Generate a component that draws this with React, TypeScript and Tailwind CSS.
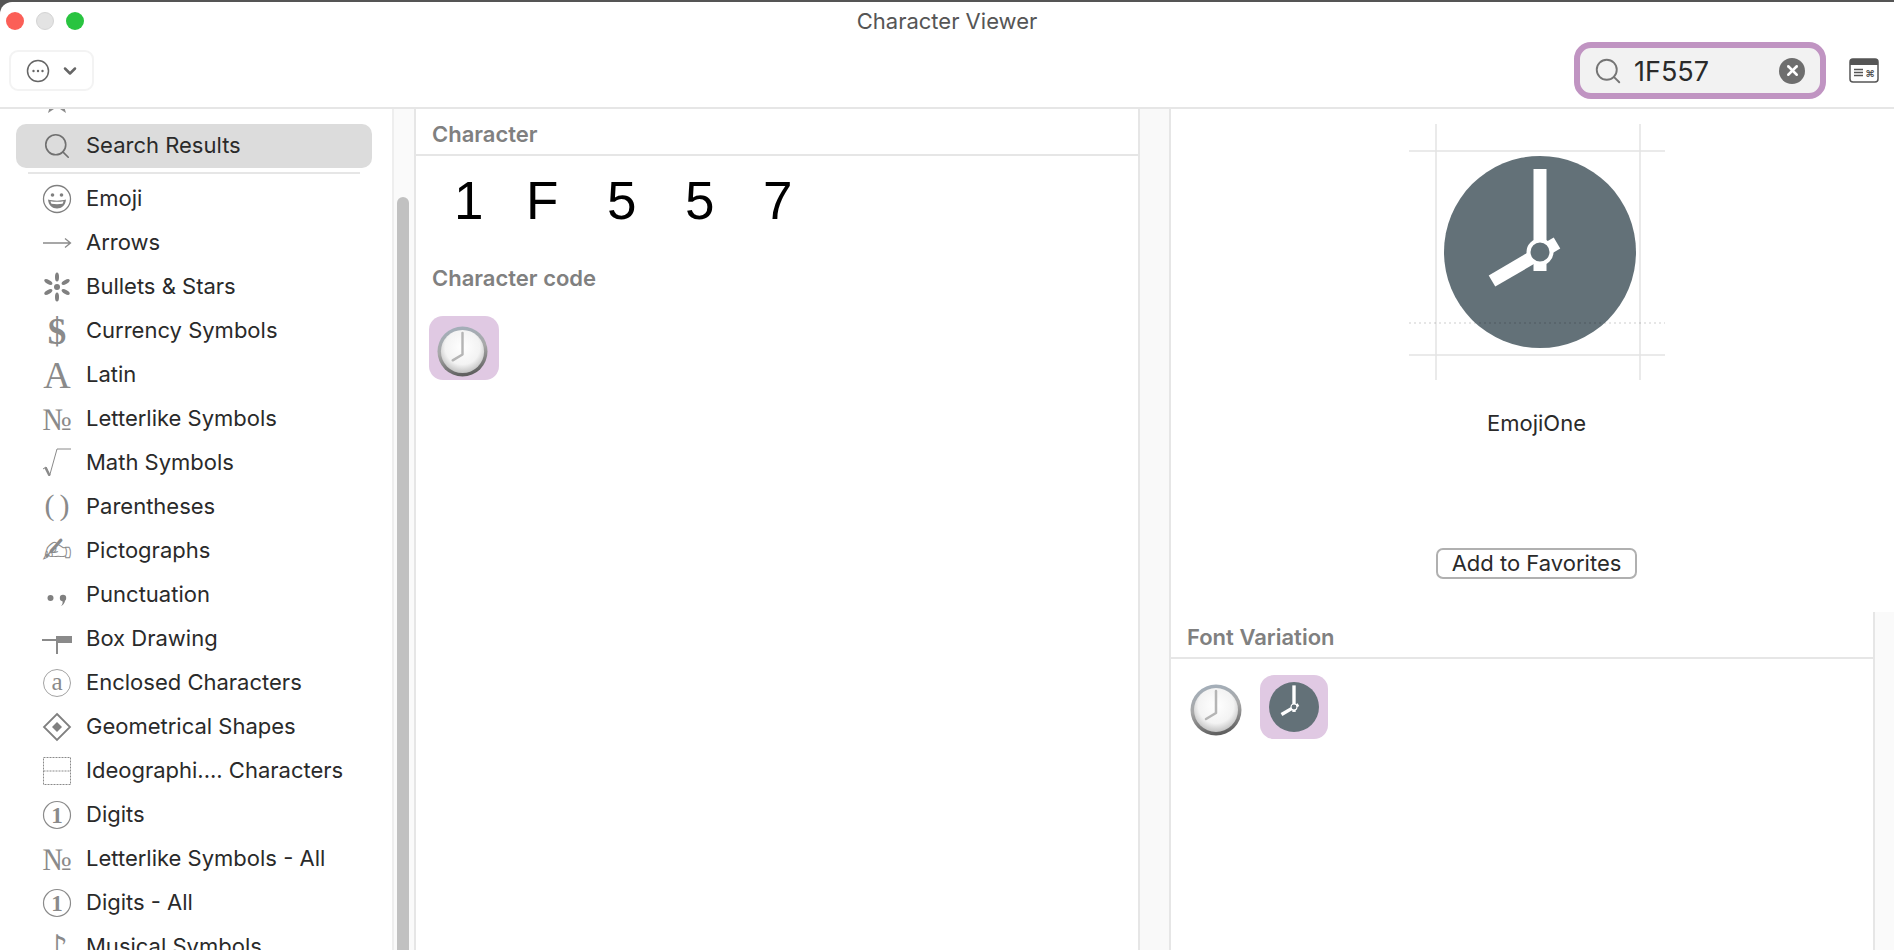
import { useId } from 'react';
import { ChevronDown, Search, X } from 'lucide-react';

// Glossy clock emoji, used in the character code tile and the variations list
function GlossyClock({ size }: { size: number }) {
  const id = useId();
  return (
    <svg width={size} height={size} viewBox="0 0 52 52">
      <defs>
        <linearGradient id={`${id}rim`} x1="0.2" y1="0" x2="0.4" y2="1">
          <stop offset="0" stopColor="#a3afbb" />
          <stop offset="0.5" stopColor="#a8a8a8" />
          <stop offset="1" stopColor="#5f5f5f" />
        </linearGradient>
        <radialGradient id={`${id}face`} cx="0.5" cy="0.4" r="0.62">
          <stop offset="0" stopColor="#ffffff" />
          <stop offset="0.65" stopColor="#f3f3f3" />
          <stop offset="1" stopColor="#bdbdbd" />
        </radialGradient>
      </defs>
      <circle cx="26" cy="26" r="25.500" fill={`url(#${id}rim)`} />
      <circle cx="26" cy="26" r="22" fill={`url(#${id}face)`} />
      <path d="M26 7V29L16 35" fill="none" stroke="#b5b5b5" strokeWidth="2.500" strokeLinecap="round" strokeLinejoin="round" />
    </svg>
  );
}

function FlatClockShape() {
  return (
    <>
      <circle cx="96" cy="96" r="96" fill="#637178" />
      <path d="M96 13V115" stroke="#fff" strokeWidth="13" />
      <path d="M113 87L48 125" stroke="#fff" strokeWidth="13" />
      <circle cx="96" cy="96" r="11.500" fill="#637178" stroke="#fff" strokeWidth="4" />
    </>
  );
}

function FlatClock({ size }: { size: number }) {
  return (
    <svg width={size} height={size} viewBox="0 0 192 192">
      <FlatClockShape />
    </svg>
  );
}

const glyph = 'text-[#8a8a8a] leading-none';
const serif = { fontFamily: '"Liberation Serif", serif' };

function Ringed({ children, bold }: { children: string; bold?: boolean }) {
  return (
    <svg width="30" height="30" viewBox="0 0 30 30">
      <circle cx="15" cy="15" r="13.500" fill="none" stroke="#8a8a8a" strokeWidth={bold ? 1.200 : 0.800} />
      <text x="15" y={bold ? 23 : 22} textAnchor="middle" fontSize={bold ? 23 : 25} fontWeight={bold ? 700 : 400} fill="#8a8a8a" style={serif}>
        {children}
      </text>
    </svg>
  );
}

const icons: Record<string, React.ReactNode> = {
  favorites: (
    <svg width="30" height="30" viewBox="0 0 30 30"><path d="M15 1l4 9h10l-8 6 3 10-9-6-9 6 3-10-8-6h10z" fill="#8a8a8a" /></svg>
  ),
  emoji: (
    <svg width="30" height="30" viewBox="0 0 30 30">
      <circle cx="15" cy="15" r="13.500" fill="none" stroke="#808080" strokeWidth="1.300" />
      <circle cx="10.500" cy="11" r="1.800" fill="#808080" />
      <circle cx="19.500" cy="11" r="1.800" fill="#808080" />
      <path d="M6 15.500c5 1.500 13 1.500 18 0c-.5 6-4.500 9-9 9s-8.500-3-9-9z" fill="#808080" />
      <path d="M8.500 17.300c4 .7 9 .7 13 0c-.3 1.200-.6 2-1 2.500c-3.500.5-7.500.5-11 0c-.4-.5-.8-1.300-1-2.500z" fill="#fff" />
    </svg>
  ),
  arrow: (
    <svg width="30" height="30" viewBox="0 0 30 30" fill="none" stroke="#8a8a8a" strokeWidth="1.300"><path d="M1 15H28M23 10.500L28.500 15L23 19.500" /></svg>
  ),
  bullets: (
    <svg width="30" height="30" viewBox="0 0 30 30" fill="#808080">
      <circle cx="15" cy="15" r="3" />
      <ellipse cx="15" cy="5" rx="2" ry="4.500" />
      <ellipse cx="15" cy="25" rx="2" ry="4.500" />
      <ellipse cx="15" cy="5" rx="2" ry="4.500" transform="rotate(60 15 15)" />
      <ellipse cx="15" cy="5" rx="2" ry="4.500" transform="rotate(120 15 15)" />
      <ellipse cx="15" cy="5" rx="2" ry="4.500" transform="rotate(240 15 15)" />
      <ellipse cx="15" cy="5" rx="2" ry="4.500" transform="rotate(300 15 15)" />
    </svg>
  ),
  currency: <span className={`${glyph} text-[37px] font-bold`} style={serif}>$</span>,
  latin: <span className={`${glyph} text-[38px]`} style={serif}>A</span>,
  letterlike: <span className={`${glyph} text-[31px]`} style={serif}>№</span>,
  math: (
    <svg width="30" height="30" viewBox="0 0 30 30" fill="none" stroke="#8a8a8a"><path d="M1 21l3-2 3.500 9L15 1h14" strokeWidth="1" /><path d="M3.500 19.500l4 8" strokeWidth="2.500" /></svg>
  ),
  parens: <span className={`${glyph} text-[30px] tracking-[5px] pl-[5px] -mt-[4px]`} style={serif}>()</span>,
  picto: <span className={`${glyph} text-[36px]`} style={{ fontFamily: '"DejaVu Sans", sans-serif' }}>✍</span>,
  punct: (
    <svg width="30" height="30" viewBox="0 0 30 30" fill="#808080"><circle cx="8.500" cy="18" r="3" /><circle cx="21" cy="18" r="3.200" /><path d="M22 18c2 2 1 6-3 8c2-2 2-4 1-6z" /></svg>
  ),
  box: (
    <svg width="30" height="30" viewBox="0 0 30 30"><path d="M0 15H14V12H30V19H16V30H14V17H0Z" fill="#8a8a8a" /></svg>
  ),
  enclosed: <Ringed>a</Ringed>,
  geo: (
    <svg width="30" height="30" viewBox="0 0 30 30"><path d="M15 2L28 15L15 28L2 15Z" fill="none" stroke="#808080" strokeWidth="1.800" /><path d="M15 10L20 15L15 20L10 15Z" fill="#808080" /></svg>
  ),
  ideo: (
    <svg width="30" height="30" viewBox="0 0 30 30" fill="none" stroke="#8a8a8a" strokeWidth="1" strokeDasharray="2 1"><rect x="1.500" y="1.500" width="27" height="27" /><path d="M1.500 15H28.500" /></svg>
  ),
  digit: <Ringed bold>1</Ringed>,
  music: <span className={`${glyph} text-[34px]`} style={{ fontFamily: '"DejaVu Sans", sans-serif' }}>♪</span>,
};

const rows: { label: string; icon: string }[] = [
  { label: 'Emoji', icon: 'emoji' },
  { label: 'Arrows', icon: 'arrow' },
  { label: 'Bullets & Stars', icon: 'bullets' },
  { label: 'Currency Symbols', icon: 'currency' },
  { label: 'Latin', icon: 'latin' },
  { label: 'Letterlike Symbols', icon: 'letterlike' },
  { label: 'Math Symbols', icon: 'math' },
  { label: 'Parentheses', icon: 'parens' },
  { label: 'Pictographs', icon: 'picto' },
  { label: 'Punctuation', icon: 'punct' },
  { label: 'Box Drawing', icon: 'box' },
  { label: 'Enclosed Characters', icon: 'enclosed' },
  { label: 'Geometrical Shapes', icon: 'geo' },
  { label: 'Ideographi.... Characters', icon: 'ideo' },
  { label: 'Digits', icon: 'digit' },
  { label: 'Letterlike Symbols - All', icon: 'letterlike' },
  { label: 'Digits - All', icon: 'digit' },
  { label: 'Musical Symbols', icon: 'music' },
];

function SidebarRow({ label, icon }: { label: string; icon: React.ReactNode }) {
  return (
    <div className="h-[44px] shrink-0 flex items-center pl-[42px] text-[22px] text-[#2a2a2a]">
      <span className="w-[30px] h-[30px] flex items-center justify-center">{icon}</span>
      <span className="ml-[14px] pb-[2px] whitespace-nowrap">{label}</span>
    </div>
  );
}

function GuideClock() {
  return (
    <svg width="256" height="256" viewBox="0 0 256 256" className="block">
      <g stroke="#e4e4e4" strokeWidth="1.500">
        <path d="M27 0V256M231 0V256" />
        <path d="M0 27H256M0 231H256" />
      </g>
      <g transform="translate(35 32)"><FlatClockShape /></g>
      <path d="M0 199H256" stroke="#00000022" strokeWidth="1.500" strokeDasharray="2 3" />
    </svg>
  );
}

export default function App() {
  return (
    <div className="w-[1894px] h-[950px] overflow-hidden bg-[#555] pt-[2px] flex flex-col" style={{ fontFamily: 'Inter, sans-serif' }}>
      <div className="flex-1 min-h-0 bg-white rounded-tl-[12px] flex flex-col">
        {/* Title bar */}
        <div className="relative h-[38px] shrink-0 flex items-center justify-center text-[22px] text-[#555555]">
          <div className="absolute left-[6px] top-[10px] flex gap-[12px]">
            <span className="w-[18px] h-[18px] rounded-full bg-[#fb5f57]" />
            <span className="w-[18px] h-[18px] rounded-full bg-[#e3e3e3] border border-[#d4d4d4]" />
            <span className="w-[18px] h-[18px] rounded-full bg-[#29c440]" />
          </div>
          Character Viewer
        </div>

        {/* Toolbar */}
        <div className="h-[69px] shrink-0 flex items-center justify-between pl-[9px] pr-[15px] pb-[6px] border-b-2 border-[#e6e6e6]">
          <div className="w-[85px] h-[41px] border-2 border-[#f3f3f3] rounded-[9px] flex items-center pl-[15px] gap-[10px]">
            <svg width="24" height="24" viewBox="0 0 24 24" fill="none">
              <circle cx="12" cy="12" r="10.500" stroke="#666" strokeWidth="1.500" />
              <circle cx="7.500" cy="12" r="1.200" fill="#666" />
              <circle cx="12" cy="12" r="1.200" fill="#666" />
              <circle cx="16.500" cy="12" r="1.200" fill="#666" />
            </svg>
            <ChevronDown size={20} strokeWidth={3} className="text-[#666]" />
          </div>
          <div className="flex items-center gap-[23px]">
            <div className="w-[252px] h-[57px] border-[6px] border-[#c094c2] rounded-[17px] bg-[#f2f2f2] flex items-center pl-[13px] pr-[15px]">
              <Search size={30} strokeWidth={1.500} className="text-[#757575] shrink-0" />
              <span className="ml-[11px] flex-1 text-[27px] leading-none pt-[2px] text-[#2a2a2a]">1F557</span>
              <span className="w-[26px] h-[26px] rounded-full bg-[#6e6e6e] flex items-center justify-center">
                <X size={17} strokeWidth={3.500} className="text-white" />
              </span>
            </div>
            <svg width="30" height="25" viewBox="0 0 30 25" fill="none">
              <rect x="1" y="1" width="28" height="23" rx="3" fill="#fff" stroke="#555" strokeWidth="1.500" />
              <path d="M1 4a3 3 0 0 1 3-3h22a3 3 0 0 1 3 3v3H1z" fill="#555" />
              <path d="M5 11.500h9M5 14.500h9M5 17.500h9" stroke="#555" strokeWidth="1.300" />
              <text x="21" y="19" textAnchor="middle" fontSize="10" fontWeight="700" fill="#555">⌘</text>
            </svg>
          </div>
        </div>

        {/* Body */}
        <div className="flex-1 min-h-0 flex">
          <aside className="w-[394px] shrink-0 overflow-hidden border-r-2 border-[#eeeeee]">
            <div className="-mt-[29px]">
              <SidebarRow label="Favorites" icon={icons.favorites} />
              <div className="mx-[16px] w-[356px] h-[44px] rounded-[10px] bg-[#dcdcdc] flex items-center pl-[26px] text-[22px] text-[#2a2a2a]">
                <Search size={30} strokeWidth={1.300} className="text-[#707070]" />
                <span className="ml-[14px] pb-[2px]">Search Results</span>
              </div>
              <div className="mx-[28px] w-[332px] h-[2px] mt-[4px] mb-[3px] bg-[#e6e6e6]" />
              {rows.map(r => (
                <SidebarRow key={r.label} label={r.label} icon={icons[r.icon]} />
              ))}
            </div>
          </aside>

          {/* Sidebar scroller */}
          <div className="w-[20px] shrink-0 bg-[#fafafa] pt-[88px] pl-[3px]">
            <div className="w-[12px] h-[800px] rounded-t-[6px] bg-[#c1c1c1]" />
          </div>

          {/* Character list */}
          <main className="w-[726px] shrink-0 border-x-2 border-[#e6e6e6]">
            <div className="h-[47px] flex items-center pl-[16px] pt-[6px] border-b-2 border-[#e6e6e6] text-[22px] font-semibold text-[#808080]">
              Character
            </div>
            <div className="flex items-center h-[90px] pl-[38px] text-[53px] text-black" style={{ fontFamily: '"Liberation Sans", sans-serif' }}>
              <span className="w-[72px]">1</span>
              <span className="w-[81px]">F</span>
              <span className="w-[78px]">5</span>
              <span className="w-[78px]">5</span>
              <span>7</span>
            </div>
            <div className="mt-[16px] pl-[16px] text-[22px] font-semibold text-[#808080]">Character code</div>
            <div className="mt-[21px] ml-[13px] w-[70px] h-[64px] rounded-[14px] bg-[#e0c9e3] flex items-center justify-center pr-[4px] pt-[6px]">
              <GlossyClock size={51} />
            </div>
          </main>

          <div className="w-[29px] shrink-0 bg-[#f9f9f9]" />

          {/* Glyph detail */}
          <section className="flex-1 min-w-0 border-l-2 border-[#e6e6e6] flex flex-col">
            <div className="h-[503px] shrink-0 flex flex-col items-center pl-[8px]">
              <div className="mt-[15px]"><GuideClock /></div>
              <div className="mt-[28px] text-[22px] leading-[31px] text-[#2a2a2a]">EmojiOne</div>
              <div className="mt-[109px] w-[201px] h-[31px] border-2 border-[#b0b0b0] rounded-[7px] flex items-center justify-center text-[22px] text-[#2a2a2a]">
                Add to Favorites
              </div>
            </div>
            <div className="flex-1 min-h-0 flex">
              <div className="flex-1 border-r-2 border-[#e6e6e6]">
                <div className="h-[47px] flex items-center pl-[16px] pt-[6px] border-b-2 border-[#e6e6e6] text-[22px] font-semibold text-[#808080]">
                  Font Variation
                </div>
                <div className="flex items-start mt-[16px] ml-[19px]">
                  <div className="mt-[9px]"><GlossyClock size={52} /></div>
                  <div className="ml-[18px] w-[68px] h-[64px] rounded-[14px] bg-[#e0c9e3] flex items-center justify-center">
                    <FlatClock size={50} />
                  </div>
                </div>
              </div>
              <div className="w-[19px] shrink-0 bg-[#fafafa]" />
            </div>
          </section>
        </div>
      </div>
    </div>
  );
}
